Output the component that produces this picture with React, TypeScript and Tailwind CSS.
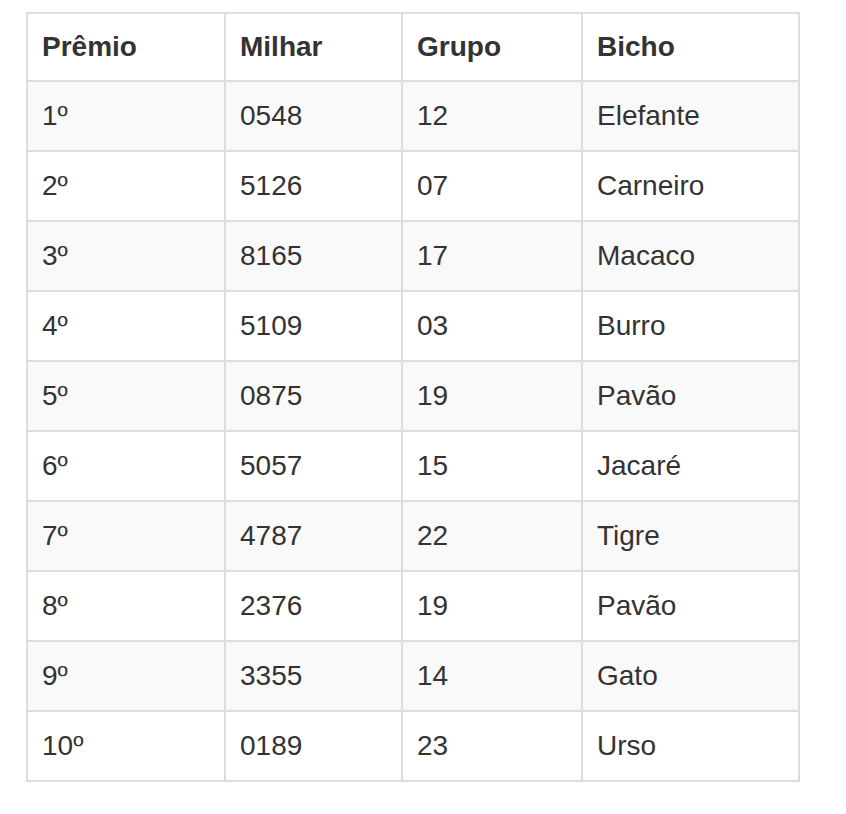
import React from "react";

const rows: [string, string, string, string][] = [
  ["1º", "0548", "12", "Elefante"],
  ["2º", "5126", "07", "Carneiro"],
  ["3º", "8165", "17", "Macaco"],
  ["4º", "5109", "03", "Burro"],
  ["5º", "0875", "19", "Pavão"],
  ["6º", "5057", "15", "Jacaré"],
  ["7º", "4787", "22", "Tigre"],
  ["8º", "2376", "19", "Pavão"],
  ["9º", "3355", "14", "Gato"],
  ["10º", "0189", "23", "Urso"],
];

const headers = ["Prêmio", "Milhar", "Grupo", "Bicho"];

export default function App() {
  return (
    <div className="min-h-[814px] bg-white pt-[12px] pl-[26px] text-[#333333] font-['Liberation_Sans',Arial,sans-serif]">
      <div className="grid w-[774px] grid-cols-[198px_177px_180px_217px] border-l-2 border-t-2 border-[#dddddd] text-[28px]">
        {headers.map((h) => (
          <div
            key={h}
            className="flex h-[68px] items-center border-b-2 border-r-2 border-[#dddddd] pl-[14px] font-bold"
          >
            {h}
          </div>
        ))}
        {rows.map((r, i) =>
          r.map((c, j) => (
            <div
              key={`${i}-${j}`}
              className={`flex h-[70px] items-center border-b-2 border-r-2 border-[#dddddd] pl-[14px] ${
                i % 2 === 0 ? "bg-[#f9f9f9]" : "bg-white"
              }`}
            >
              {c}
            </div>
          ))
        )}
      </div>
    </div>
  );
}
